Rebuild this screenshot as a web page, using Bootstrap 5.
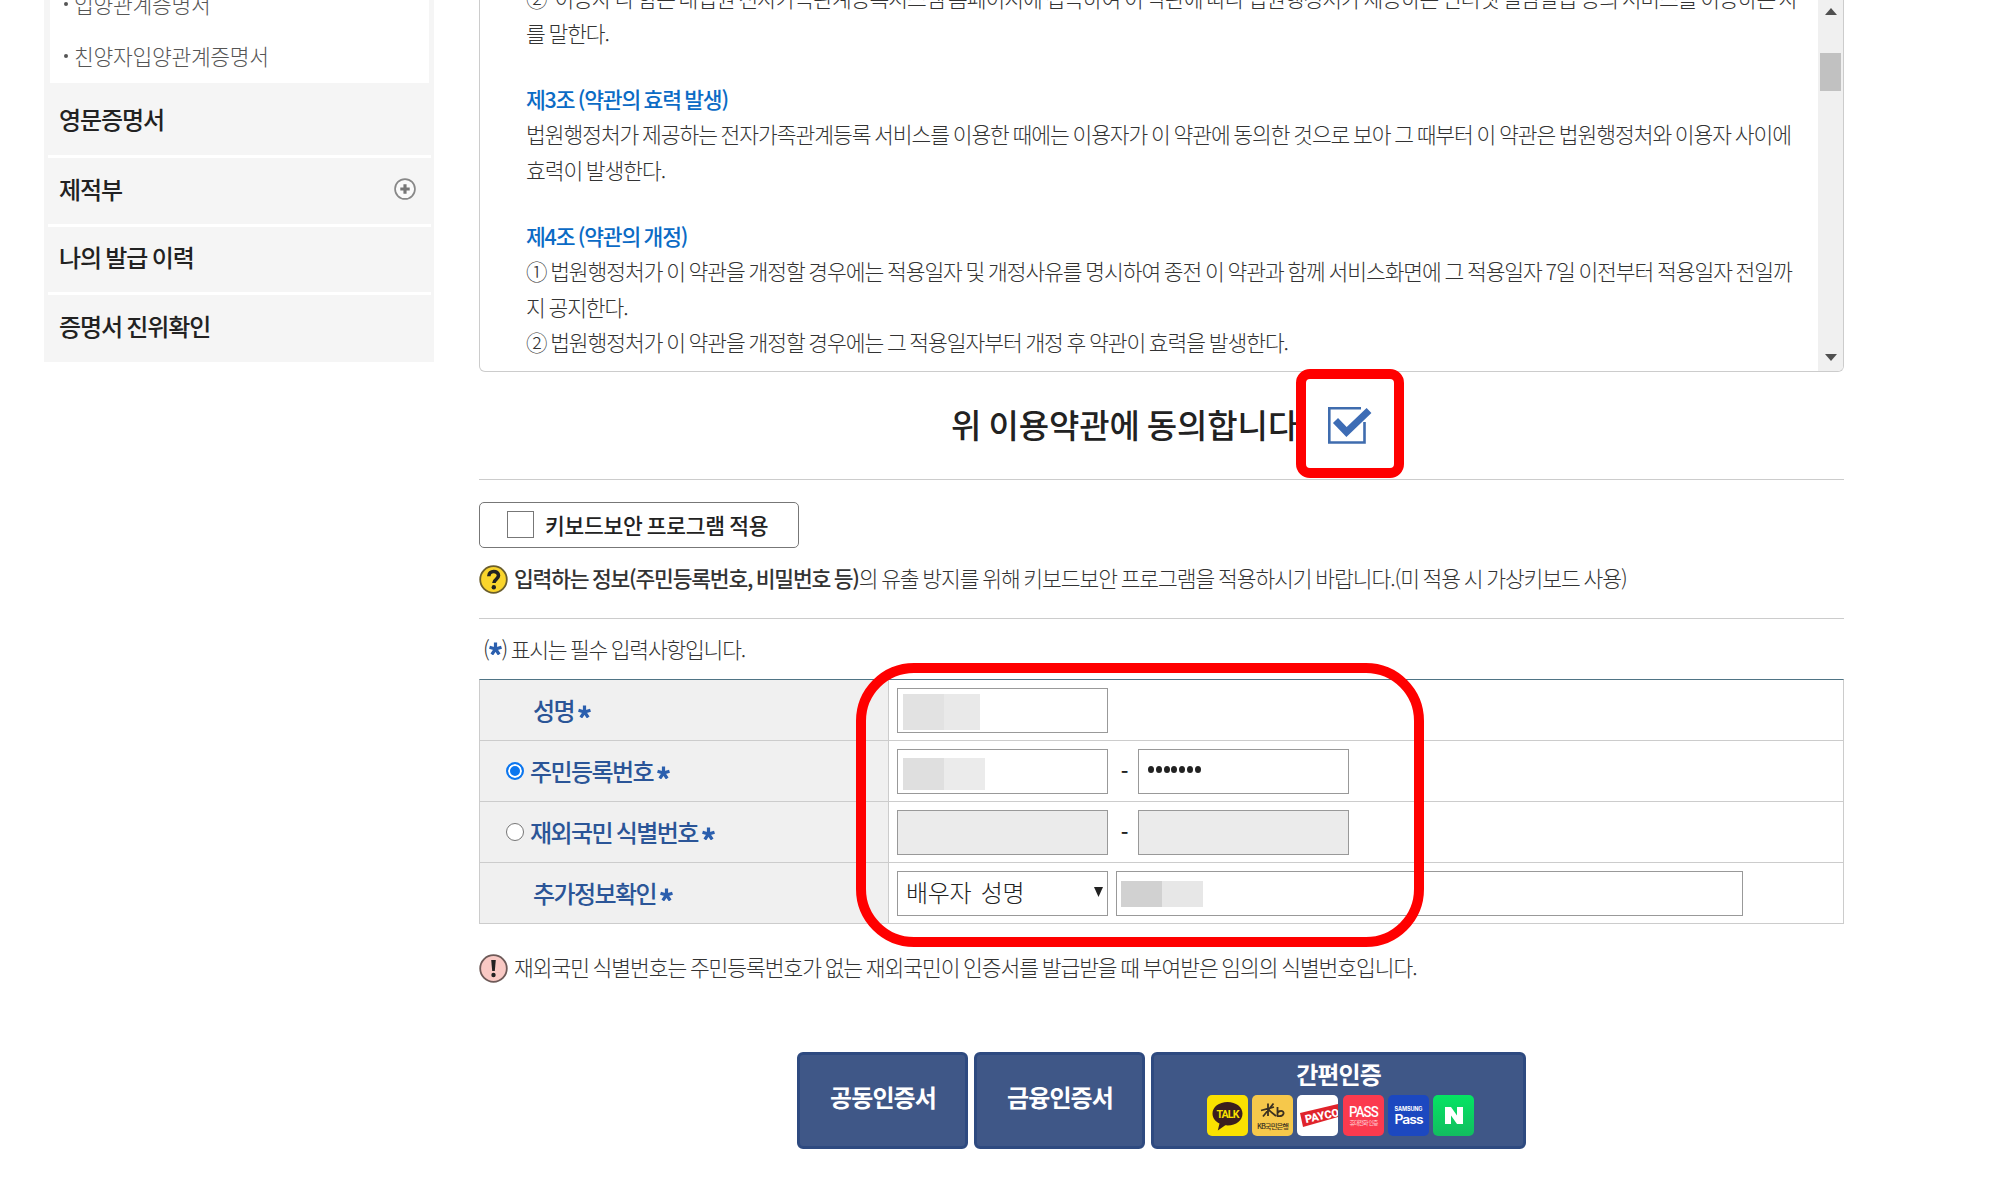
<!DOCTYPE html>
<html lang="ko">
<head>
  <meta charset="UTF-8">
  <meta name="viewport" content="width=device-width, initial-scale=1">
  <title>전자가족관계등록시스템</title>
  <link href="https://cdn.jsdelivr.net/npm/bootstrap@5.3.0/dist/css/bootstrap.min.css" rel="stylesheet">
  <style>
    body {
      font-family: "Noto Sans CJK KR", sans-serif;
      font-size: 21.5px;
      font-weight: 300;
      line-height: 30px;
      letter-spacing: -1.06px;
      word-spacing: -1.25px;
      color: #333;
      overflow: hidden;
      white-space: nowrap;
    }
    .page { height: 1199px; padding-left: 44px; gap: 45px; }

    /* 왼쪽 메뉴 */
    .side { width: 390px; height: 362px; background: #f5f5f5; padding: 0 3px 0 4px; font-size: 24px; font-weight: 500; color: #222; letter-spacing: -1.1px; }
    .side-sub { height: 83px; margin: 0 2px; padding: 0 0 1px 14px; background: #fff; font-size: 21.5px; font-weight: 300; letter-spacing: -.3px; color: #555; }
    .side-sub li { height: 52px; gap: 6px; }
    .side-sub li::before { content: ""; width: 4px; height: 4px; border-radius: 50%; background: #555; }
    .side-item { height: 68.5px; padding: 0 15px 4px 11px; border-bottom: 3px solid #fff; }
    .side-item:first-of-type { height: 75px; padding-top: 4px; }
    .side-item:last-child { border-bottom: 0; height: 67px; padding-bottom: 6px; }

    /* 약관 */
    .content-area { width: 1365px; }
    .terms { height: 372px; border: 1px solid #ccc; border-top: 0; border-radius: 0 0 6px 6px; }
    .terms-text { width: 1338px; padding: 0 0 11px 46px; line-height: 35.6px; }
    .terms-text h2 { margin: 30px 0 0; font-size: 21.5px; font-weight: 500; line-height: 35.6px; color: #0b6bc5; letter-spacing: -1.2px; }
    .scroll-track { width: 25px; background: #f0f0f0; padding: 8px 2px 10px; }
    .scroll-thumb { width: 21px; height: 38px; margin-bottom: 225px; background: #c1c1c1; }
    .agree { height: 108px; border-bottom: 1px solid #ccc; padding: 0 0 4px 472px; font-size: 33px; font-weight: 500; letter-spacing: -.1px; word-spacing: -2px; color: #222; }
    .ring { position: absolute; border: 10px solid #f00; }
    .ring-check { left: 817px; top: -3px; width: 108px; height: 109px; border-radius: 14px; background: #fff; padding: 28px 0 0 22px; line-height: 0; }
    .ring-form { left: 376px; top: -17px; width: 568px; height: 284px; border-radius: 58px; }

    .keyboard { width: 320px; height: 46px; margin-top: 22px; padding: 0 0 1px 27px; gap: 11px; border: 1px solid #777; border-radius: 5px; font-weight: 500; letter-spacing: -.3px; color: #222; }
    .keyboard i { width: 27px; height: 27px; border: 1px solid #777; }
    .tip { height: 30px; gap: 6px; }
    .tip span { padding-bottom: 2px; }
    .tip b { font-weight: 500; letter-spacing: -1.2px; }
    .line-below { margin-top: 16px; height: 55px; padding-bottom: 25px; border-bottom: 1px solid #ccc; }
    .required { height: 60px; padding: 0 0 1px 4px; letter-spacing: -1.2px; }

    /* 입력 표 */
    .form-rows { border: 1px solid #ccc; border-top-color: #4f7485; height: 245px; }
    .form-line { height: 61px; border-bottom: 1px solid #ccc; }
    .form-line:nth-child(4) { border-bottom: 0; height: 60px; }
    .form-label-cell { width: 409px; background: #f0f0f0; border-right: 1px solid #ccc; padding: 0 0 1px 26px; font-size: 24px; font-weight: 500; letter-spacing: -1.6px; color: #2b5597; }
    .form-label-cell.wide { padding-left: 53px; }
    .form-label-cell svg { margin: 4px 0 0 4px; }
    .dot { width: 18px; height: 18px; border: 1.5px solid #767676; border-radius: 50%; background: #fff; margin-right: 6px; }
    .dot.on { border: 2px solid #0b76ef; background: #0b76ef; box-shadow: inset 0 0 0 2px #fff; }
    .form-cell { padding-left: 8px; }
    .field { width: 211px; height: 45px; border: 1px solid #999; background: #fff; padding-left: 5px; }
    .field.off { background: #ebebeb; }
    .field.long { width: 627px; margin-left: 8px; padding-left: 4px; }
    .dash { width: 30px; padding-left: 2px; font-weight: 500; color: #222; }
    .dots { padding-left: 9px; gap: 1.8px; }
    .dots i { width: 6px; height: 7px; border-radius: 50%; background: #222; margin-bottom: 3px; }
    .pick { padding: 0 4px 3px 8px; font-size: 24px; font-weight: 300; letter-spacing: -.3px; word-spacing: 3px; color: #222; }
    .blot { width: 41px; height: 36px; background: #e2e2e2; margin-top: 4px; }
    .blot + .blot { width: 36px; background: #e9e9e9; }
    .blot.mid { height: 32px; margin-top: 5px; background: #dfdfdf; }
    .blot.mid + .mid { width: 41px; background: #ebebeb; }
    .blot.low { height: 26px; margin-top: 2px; background: #d1d1d1; }
    .blot.low + .low { width: 41px; background: #e7e7e7; }
    .notice { margin-top: 29px; }

    /* 인증 버튼 */
    .auth { margin-top: 69px; padding-left: 318px; gap: 6px; }
    .auth-btn { width: 171px; height: 97px; border: 3px solid #2e4a80; border-radius: 6px; background: #3f5787; color: #fff; font-size: 24px; font-weight: 700; letter-spacing: -.9px; padding: 0 0 7px 1px; }
    .auth-btn.easy { width: 375px; padding: 0; }
    .easy-title { height: 40px; line-height: 38px; }
    .logos { gap: 4.3px; margin-left: 4px; }
  </style>
</head>
<body>
  <svg width="0" height="0" class="position-absolute">
    <defs>
      <g id="star" stroke="#2b5fae" stroke-width="3.2">
        <path d="M6.5 0.5V7M0.5 5.2L6.5 7M12.5 5.2L6.5 7M2.8 12.5L6.5 7M10.2 12.5L6.5 7"/>
      </g>
    </defs>
  </svg>

  <div class="page d-flex align-items-start">
    <nav class="side">
      <ul class="side-sub list-unstyled d-flex flex-column justify-content-end">
        <li class="d-flex align-items-center flex-shrink-0">입양관계증명서</li>
        <li class="d-flex align-items-center flex-shrink-0">친양자입양관계증명서</li>
      </ul>
      <div class="side-item d-flex align-items-center">영문증명서</div>
      <div class="side-item d-flex align-items-center justify-content-between">제적부
        <svg width="22" height="22" viewBox="0 0 21 21" fill="none" stroke="#888">
          <circle cx="10.5" cy="10.5" r="9.5" fill="#fafafa" stroke-width="1.6"/>
          <path d="M10.5 6v9M6 10.5h9" stroke="#777" stroke-width="3"/>
        </svg>
      </div>
      <div class="side-item d-flex align-items-center">나의 발급 이력</div>
      <div class="side-item d-flex align-items-center">증명서 진위확인</div>
    </nav>

    <main class="content-area">
      <section class="terms d-flex overflow-hidden">
        <div class="terms-text flex-shrink-0 d-flex flex-column justify-content-end">
          <div>② '이용자'라 함은 대법원 전자가족관계등록시스템 홈페이지에 접속하여 이 약관에 따라 법원행정처가 제공하는 인터넷 열람발급 등의 서비스를 이용하는 자<br>를 말한다.</div>
          <h2>제3조 (약관의 효력 발생)</h2>
          <div>법원행정처가 제공하는 전자가족관계등록 서비스를 이용한 때에는 이용자가 이 약관에 동의한 것으로 보아 그 때부터 이 약관은 법원행정처와 이용자 사이에<br>효력이 발생한다.</div>
          <h2>제4조 (약관의 개정)</h2>
          <div>① 법원행정처가 이 약관을 개정할 경우에는 적용일자 및 개정사유를 명시하여 종전 이 약관과 함께 서비스화면에 그 적용일자 7일 이전부터 적용일자 전일까<br>지 공지한다.<br>② 법원행정처가 이 약관을 개정할 경우에는 그 적용일자부터 개정 후 약관이 효력을 발생한다.</div>
        </div>
        <div class="scroll-track flex-shrink-0 d-flex flex-column align-items-center justify-content-between">
          <svg width="12" height="7" viewBox="0 0 12 7"><path d="M6 0l6 7H0z" fill="#505050"/></svg>
          <div class="scroll-thumb"></div>
          <svg width="12" height="7" viewBox="0 0 12 7"><path d="M6 7L0 0h12z" fill="#505050"/></svg>
        </div>
      </section>

      <section class="agree position-relative d-flex align-items-center">위 이용약관에 동의합니다
        <div class="ring ring-check">
          <svg width="44" height="38" viewBox="0 0 44 38" fill="none">
            <path d="M36.5 15V35.5H1.3V1.3H33" stroke="#3f6cae" stroke-width="2.6"/>
            <path d="M7.5 13.5L18.5 25L41 3.5" stroke="#3d6cb5" stroke-width="7"/>
          </svg>
        </div>
      </section>

      <label class="keyboard d-flex align-items-center"><i></i>키보드보안 프로그램 적용</label>

      <div class="line-below">
        <div class="tip d-flex align-items-center">
          <svg width="29" height="29" viewBox="0 0 29 29">
            <circle cx="14.5" cy="14.5" r="13.3" fill="#fad52c" stroke="#6b5e2c" stroke-width="1.8"/>
            <path d="M9.8 11.2c0-6.2 9.7-6 9.7-.6 0 3.8-4.6 3.6-4.6 7.3" fill="none" stroke="#222" stroke-width="3.6"/>
            <circle cx="14.8" cy="22.2" r="2.2" fill="#222"/>
          </svg>
          <span><b>입력하는 정보(주민등록번호, 비밀번호 등)</b>의 유출 방지를 위해 키보드보안 프로그램을 적용하시기 바랍니다.(미 적용 시 가상키보드 사용)</span>
        </div>
      </div>

      <div class="required d-flex align-items-center">(<svg width="13" height="13" viewBox="0 0 13 13"><use href="#star"/></svg><span>) 표시는 필수 입력사항입니다.</span></div>

      <section class="form-rows position-relative">
        <div class="form-line d-flex">
          <div class="form-label-cell wide d-flex align-items-center">성명<svg width="13" height="13" viewBox="0 0 13 13"><use href="#star"/></svg></div>
          <div class="form-cell d-flex align-items-center">
            <div class="field d-flex align-items-center"><span class="blot"></span><span class="blot"></span></div>
          </div>
        </div>
        <div class="form-line d-flex">
          <div class="form-label-cell d-flex align-items-center"><span class="dot on"></span>주민등록번호<svg width="13" height="13" viewBox="0 0 13 13"><use href="#star"/></svg></div>
          <div class="form-cell d-flex align-items-center">
            <div class="field d-flex align-items-center"><span class="blot mid"></span><span class="blot mid"></span></div>
            <div class="dash text-center">-</div>
            <div class="field dots d-flex align-items-center"><i></i><i></i><i></i><i></i><i></i><i></i><i></i></div>
          </div>
        </div>
        <div class="form-line d-flex">
          <div class="form-label-cell d-flex align-items-center"><span class="dot"></span>재외국민 식별번호<svg width="13" height="13" viewBox="0 0 13 13"><use href="#star"/></svg></div>
          <div class="form-cell d-flex align-items-center">
            <div class="field off"></div>
            <div class="dash text-center">-</div>
            <div class="field off"></div>
          </div>
        </div>
        <div class="form-line d-flex">
          <div class="form-label-cell wide d-flex align-items-center">추가정보확인<svg width="13" height="13" viewBox="0 0 13 13"><use href="#star"/></svg></div>
          <div class="form-cell d-flex align-items-center">
            <div class="field pick d-flex align-items-center justify-content-between">배우자 성명<svg width="9" height="10" viewBox="0 0 9 10"><path d="M0 0h9L4.5 10z" fill="#222"/></svg></div>
            <div class="field long d-flex align-items-center"><span class="blot low"></span><span class="blot low"></span></div>
          </div>
        </div>
        <div class="ring ring-form"></div>
      </section>

      <div class="notice tip d-flex align-items-center">
        <svg width="29" height="29" viewBox="0 0 29 29">
          <circle cx="14.5" cy="14.5" r="13.3" fill="#f9c9c4" stroke="#6e5a58" stroke-width="1.8"/>
          <path d="M12.2 6h4.6l-1 11h-2.6z" fill="#222"/>
          <circle cx="14.5" cy="21" r="2.2" fill="#222"/>
        </svg>
        <span>재외국민 식별번호는 주민등록번호가 없는 재외국민이 인증서를 발급받을 때 부여받은 임의의 식별번호입니다.</span>
      </div>

      <div class="auth d-flex">
        <button type="button" class="auth-btn">공동인증서</button>
        <button type="button" class="auth-btn">금융인증서</button>
        <button type="button" class="auth-btn easy d-flex flex-column align-items-center">
          <span class="easy-title">간편인증</span>
          <span class="logos d-flex">
            <svg width="41" height="41" viewBox="0 0 41 41">
              <rect width="41" height="41" rx="5" fill="#fae100"/>
              <path d="M20.5 7C12 7 5.500 12 5.500 18.500c0 4.500 3 8.200 7 10l-1.700 7 7.500-5.200c10 1 17.200-4.500 17.200-11.800C35.500 12 29 7 20.500 7z" fill="#3b1e1e"/>
              <text x="20.500" y="22.800" font-family="Roboto" font-size="10.500" font-weight="700" textLength="22" lengthAdjust="spacingAndGlyphs" text-anchor="middle" fill="#fae100">TALK</text>
            </svg>
            <svg width="41" height="41" viewBox="0 0 41 41">
              <rect width="41" height="41" rx="5" fill="#f6c84b"/>
              <path d="M9 15.500l13-3.500M11 21.500L21.500 8.500M16 8.500v12.500M15.500 14l8.500 7M25.500 12v9c7.500 1 7.500-5.500 3-5-1.500 0-2.500 1-3 2" fill="none" stroke="#3b3020" stroke-width="1.800"/>
              <text x="20.500" y="33.500" font-family="Noto Sans CJK KR" font-size="7" font-weight="500" textLength="31" lengthAdjust="spacingAndGlyphs" text-anchor="middle" fill="#3b3020">KB국민은행</text>
            </svg>
            <svg width="41" height="41" viewBox="0 0 41 41">
              <rect width="41" height="41" rx="5" fill="#fff"/>
              <path d="M3 18L41 9v13L6 32z" fill="#e0232b"/>
              <text x="9" y="28" transform="rotate(-12 9 28)" font-family="Roboto" font-size="11" font-weight="900" letter-spacing="0" fill="#fff">PAYCO</text>
            </svg>
            <svg width="41" height="41" viewBox="0 0 41 41">
              <rect width="41" height="41" rx="5" fill="#fb3a4e"/>
              <text x="20.500" y="21.500" font-family="Roboto" font-size="14.500" font-weight="500" textLength="29" lengthAdjust="spacingAndGlyphs" text-anchor="middle" fill="#fff">PASS</text>
              <text x="20.500" y="29.500" font-family="Noto Sans CJK KR" font-size="6" font-weight="400" textLength="28" lengthAdjust="spacingAndGlyphs" text-anchor="middle" fill="#ffd3d8">휴대전화 인증</text>
            </svg>
            <svg width="41" height="41" viewBox="0 0 41 41">
              <rect width="41" height="41" rx="5" fill="#1c48c0"/>
              <text x="20.500" y="16" font-family="Inter" font-size="5.500" font-weight="700" letter-spacing="0" textLength="28" text-anchor="middle" fill="#fff">SAMSUNG</text>
              <text x="20.500" y="28.500" font-family="Inter" font-size="12.500" font-weight="600" textLength="28" lengthAdjust="spacingAndGlyphs" text-anchor="middle" fill="#fff">Pass</text>
            </svg>
            <svg width="41" height="41" viewBox="0 0 41 41">
              <defs><linearGradient id="green" x2="0" y2="1"><stop stop-color="#05e463"/><stop offset="1" stop-color="#12bd60"/></linearGradient></defs>
              <rect width="41" height="41" rx="5" fill="url(#green)"/>
              <path d="M12 12h6l6 8.500V12h6v17h-6l-6-8.500V29h-6z" fill="#fff"/>
            </svg>
          </span>
        </button>
      </div>
    </main>
  </div>

  <script src="https://cdn.jsdelivr.net/npm/bootstrap@5.3.0/dist/js/bootstrap.bundle.min.js"></script>
</body>
</html>
